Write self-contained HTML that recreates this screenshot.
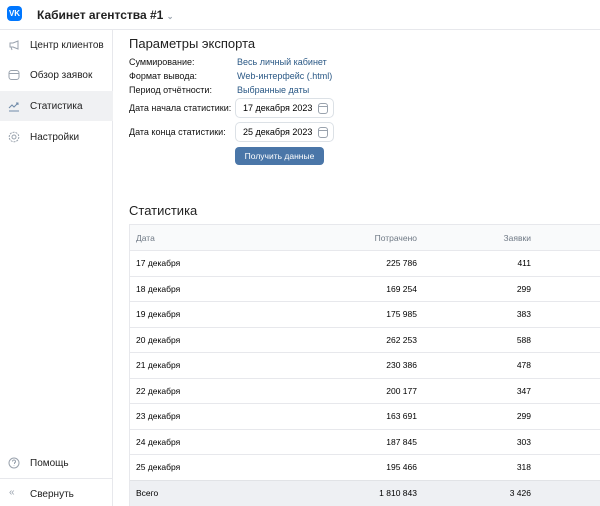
<!DOCTYPE html>
<html><head><meta charset="utf-8"><style>
*{box-sizing:border-box;margin:0;padding:0}
body{width:600px;height:506px;overflow:hidden;background:#fff;font-family:"Liberation Sans",sans-serif;color:#000;position:relative}
.a{position:absolute;white-space:nowrap}
.hdr{left:0;top:0;width:600px;height:30px;border-bottom:1px solid #e7e8ec}
.side{left:0;top:30px;width:113px;height:476px;border-right:1px solid #e7e8ec}
.nav{font-size:10px;color:#222}
.ic{position:absolute;left:8px;width:12px;height:12px;color:#99a2ad}
.lbl{font-size:9px;color:#111}
.val{font-size:9px;color:#2a5885}
.inp{left:235px;width:99px;height:20px;border:1px solid #dce1e6;border-radius:5px;font-size:9px;padding:4px 0 0 7px}
.cal{position:absolute;right:5px;top:4px;width:10px;height:11px;border:1px solid #99a2ad;border-radius:3px}
.cal:after{content:"";position:absolute;left:0;right:0;top:2px;border-top:1px solid #99a2ad}
table{position:absolute;left:129px;top:224px;width:480px;border-collapse:collapse;font-size:8.5px}
td{height:25.5px;border-top:1px solid #e7e8ec;padding:0 7px}
td.r{text-align:right;padding-right:0}
tr.h td{background:#f9fafb;color:#6f7985;height:26px}
tr.t td{background:#eef0f3;border-top:1px solid #e1e3e6}
</style></head><body>
<div class="a hdr"></div>
<div class="a" style="left:7px;top:6px;width:15px;height:15px;background:#0077ff;border-radius:4px;color:#fff;font-size:8px;font-weight:bold;text-align:center;line-height:15px">VK</div>
<div class="a" style="left:37px;top:8px;font-size:12px;font-weight:bold;color:#222">Кабинет агентства #1 <span style="color:#99a2ad;font-size:8px">&#8964;</span></div>
<div class="a side"></div>
<div class="a" style="left:0;top:91px;width:113px;height:30px;background:#f0f1f3"></div>
<svg class="ic" style="top:39px" viewBox="0 0 12 12" fill="none" stroke="#99a2ad"><path d="M2 4h3l5-2v8L5 8H2z M3 8l1 3"/></svg>
<div class="a nav" style="left:30px;top:40px">Центр клиентов</div>
<svg class="ic" style="top:69px" viewBox="0 0 12 12" fill="none" stroke="#99a2ad"><rect x="1" y="1.5" width="10" height="9" rx="2.5"/><path d="M1 4.5h10"/></svg>
<div class="a nav" style="left:30px;top:70px">Обзор заявок</div>
<svg class="ic" style="top:100px" viewBox="0 0 12 12" fill="none" stroke="#6f8aa8"><path d="M1 8l3-3 2 2 4-4M8 3h2v2M1 11h10"/></svg>
<div class="a nav" style="left:30px;top:101px">Статистика</div>
<svg class="ic" style="top:131px" viewBox="0 0 12 12" fill="none" stroke="#99a2ad"><circle cx="6" cy="6" r="2"/><circle cx="6" cy="6" r="4.8" stroke-dasharray="2 1"/></svg>
<div class="a nav" style="left:30px;top:132px">Настройки</div>
<svg class="ic" style="top:457px" viewBox="0 0 12 12" fill="none" stroke="#99a2ad"><circle cx="6" cy="6" r="5"/><path d="M4.5 4.5a1.5 1.5 0 1 1 2 1.4V7M6 8.5v.5"/></svg>
<div class="a nav" style="left:30px;top:458px">Помощь</div>
<div class="a" style="left:0;top:478px;width:113px;border-top:1px solid #e7e8ec"></div>
<div class="a" style="left:9px;top:487px;font-size:10px;color:#99a2ad">«</div>
<div class="a nav" style="left:30px;top:489px">Свернуть</div>

<div class="a" style="left:129px;top:36px;font-size:13px;color:#222">Параметры экспорта</div>
<div class="a lbl" style="left:129px;top:57px">Суммирование:</div><div class="a val" style="left:237px;top:57px">Весь личный кабинет</div>
<div class="a lbl" style="left:129px;top:71px">Формат вывода:</div><div class="a val" style="left:237px;top:71px">Web-интерфейс (.html)</div>
<div class="a lbl" style="left:129px;top:85px">Период отчётности:</div><div class="a val" style="left:237px;top:85px">Выбранные даты</div>
<div class="a lbl" style="left:129px;top:103px">Дата начала статистики:</div>
<div class="a inp" style="top:98px">17 декабря 2023<span class="cal"></span></div>
<div class="a lbl" style="left:129px;top:127px">Дата конца статистики:</div>
<div class="a inp" style="top:122px">25 декабря 2023<span class="cal"></span></div>
<div class="a" style="left:235px;top:147px;width:89px;height:18px;background:#4a76a8;border-radius:4px;color:#fff;font-size:8.5px;text-align:center;line-height:18px">Получить данные</div>

<div class="a" style="left:129px;top:203px;font-size:13px;color:#222">Статистика</div>
<table>
<tr class="h"><td style="width:118px">Дата</td><td class="r" style="width:170px">Потрачено</td><td class="r" style="width:114px">Заявки</td><td></td></tr>
<tr><td>17 декабря</td><td class="r">225 786</td><td class="r">411</td><td></td></tr>
<tr><td>18 декабря</td><td class="r">169 254</td><td class="r">299</td><td></td></tr>
<tr><td>19 декабря</td><td class="r">175 985</td><td class="r">383</td><td></td></tr>
<tr><td>20 декабря</td><td class="r">262 253</td><td class="r">588</td><td></td></tr>
<tr><td>21 декабря</td><td class="r">230 386</td><td class="r">478</td><td></td></tr>
<tr><td>22 декабря</td><td class="r">200 177</td><td class="r">347</td><td></td></tr>
<tr><td>23 декабря</td><td class="r">163 691</td><td class="r">299</td><td></td></tr>
<tr><td>24 декабря</td><td class="r">187 845</td><td class="r">303</td><td></td></tr>
<tr><td>25 декабря</td><td class="r">195 466</td><td class="r">318</td><td></td></tr>
<tr class="t"><td>Всего</td><td class="r">1 810 843</td><td class="r">3 426</td><td></td></tr>
</table>
<div class="a" style="left:129px;top:224px;height:282px;border-left:1px solid #e7e8ec"></div>
</body></html>
